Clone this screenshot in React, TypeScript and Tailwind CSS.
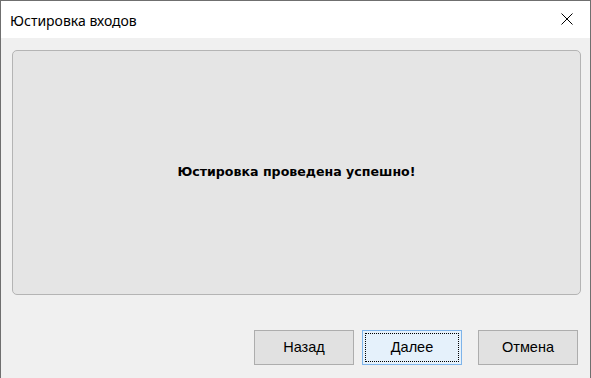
import React from 'react';

function DialogButton({
  label,
  isDefault = false,
}: {
  label: string;
  isDefault?: boolean;
}) {
  return (
    <button
      type="button"
      className={`relative w-[100px] h-[35px] border text-[14.5px] text-black flex items-center justify-center ${
        isDefault ? 'bg-[#e5f1fb] border-[#7eb4ea]' : 'bg-[#e1e1e1] border-[#adadad]'
      }`}
      style={{ fontFamily: '"Liberation Sans", Arial, sans-serif' }}
    >
      {isDefault && (
        <span className="absolute inset-[2px] border border-dotted border-black pointer-events-none" />
      )}
      {label}
    </button>
  );
}

export default function App() {
  return (
    <div className="w-[591px] h-[378px] bg-[#f0f0f0] border-x border-t border-[#6f6f6f] flex flex-col overflow-hidden">
      <header className="h-[37px] bg-white flex items-center justify-between shrink-0">
        <span
          className="ml-[9px] mt-[1px] text-[14px] text-black"
          style={{ fontFamily: '"Noto Sans", "Open Sans", sans-serif' }}
        >
          Юстировка входов
        </span>
        <svg width="46" height="37" viewBox="0 0 46 37">
          <path d="M17.5 12.5 L28.5 23.5 M28.5 12.5 L17.5 23.5" stroke="#000" strokeWidth="1" />
        </svg>
      </header>

      <main className="flex flex-col">
        <div className="ml-[11px] mt-[12px] w-[569px] h-[245px] bg-[#e5e5e5] border border-[#b4b4b4] rounded-[5px] flex items-center justify-center">
          <span
            className="font-bold text-[12.6px] text-black"
            style={{ fontFamily: '"DejaVu Sans", Verdana, sans-serif' }}
          >
            Юстировка проведена успешно!
          </span>
        </div>

        <div className="flex justify-end mt-[35px] mr-[12px]">
          <DialogButton label="Назад" />
          <div className="ml-[8px]">
            <DialogButton label="Далее" isDefault />
          </div>
          <div className="ml-[16px]">
            <DialogButton label="Отмена" />
          </div>
        </div>
      </main>
    </div>
  );
}
